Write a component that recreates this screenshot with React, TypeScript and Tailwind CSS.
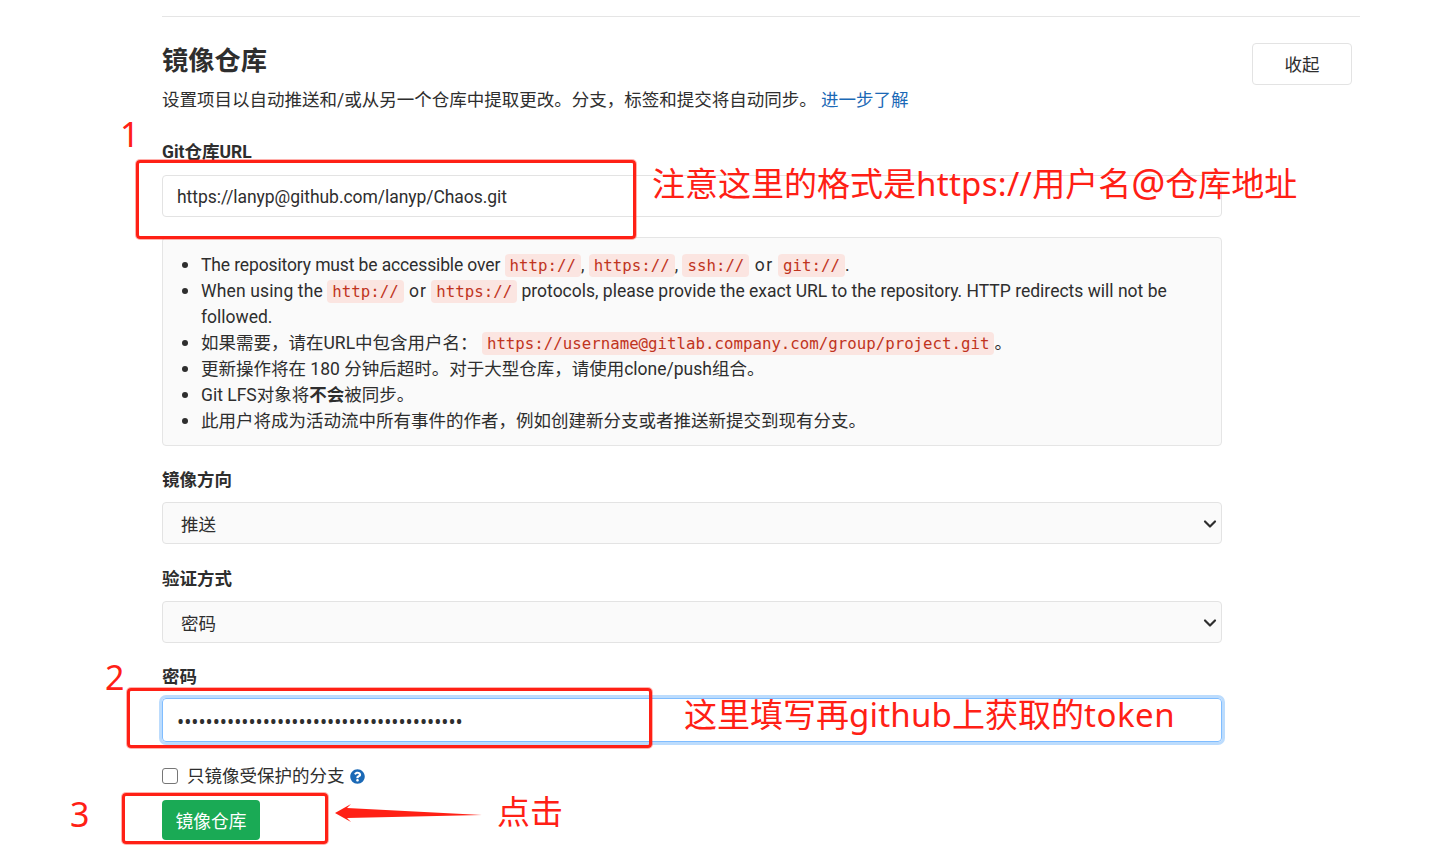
import { ChevronDown } from "lucide-react";
import { FaQuestionCircle } from "react-icons/fa";
import type { ReactNode } from "react";

const Code = ({ children }: { children: ReactNode }) => (
  <code className="bg-[#fbe5e1] text-[#c0341d] rounded-[4px] px-[5px] py-[2px] leading-none font-['DejaVu_Sans_Mono',monospace] text-[15.76px]">
    {children}
  </code>
);

const Item = ({ children }: { children: ReactNode }) => (
  <li className="relative before:absolute before:left-[-19px] before:top-[10px] before:w-[6px] before:h-[6px] before:rounded-full before:bg-[#2e2e2e]">
    {children}
  </li>
);

const Field = ({ label, gap, children }: { label: string; gap: string; children: ReactNode }) => (
  <div className={`flex flex-col w-[1060px] ${gap}`}>
    <label className="font-bold text-[#2e2e2e]">{label}</label>
    {children}
  </div>
);

const FakeSelect = ({ value }: { value: string }) => (
  <div className="relative h-[42px]">
    <select
      defaultValue={value}
      className="appearance-none w-full h-full bg-[#fafafa] border border-[#e3e3e3] rounded-[4px] pl-[18px] pt-[4px] text-[#2e2e2e]"
    >
      <option>{value}</option>
    </select>
    <ChevronDown size={20} strokeWidth={2.6} className="absolute right-[2px] top-[12px] text-[#2e2e2e]" />
  </div>
);

const App = () => {
  return (
    <div className="relative w-[1435px] h-[849px] overflow-hidden bg-white text-[#2e2e2e] text-[17.5px] leading-[26px] font-['Roboto','Noto_Sans_CJK_SC',sans-serif]">
      <div className="flex flex-col ml-[162px] w-[1198px] pt-[16px]">
        <div className="border-t border-[#e5e5e5] flex justify-between pt-[26px] pr-[8px]">
          <div className="flex flex-col gap-[9px]">
            <h4 className="text-[26.25px] font-bold leading-[34px] pt-[1px] text-[#2e2e2e]">镜像仓库</h4>
            <p>
              设置项目以自动推送和/或从另一个仓库中提取更改。分支，标签和提交将自动同步。{" "}
              <a className="text-[#1b69b6]">进一步了解</a>
            </p>
          </div>
          <button className="w-[100px] h-[42px] border border-[#e3e3e3] rounded-[4px] pt-[2px] text-[#2e2e2e]">收起</button>
        </div>

        <div className="flex flex-col gap-[20px] mt-[26px]">
          <Field label="Git仓库URL" gap="gap-[10px]">
            <input
              readOnly
              value="https://lanyp@github.com/lanyp/Chaos.git"
              className="block h-[42px] border border-[#e3e3e3] rounded-[4px] px-[14px] pt-[2px] tracking-[-0.05px] text-[#2e2e2e]"
            />
          </Field>

          <div className="w-[1060px] bg-[#fafafa] border border-[#e5e5e5] rounded-[4px] pt-[14px] pb-[11px]">
            <ul className="pl-[38px] pr-[20px]">
              <Item>
                <span className="tracking-[-0.13px]">The repository must be accessible over</span> <Code>http://</Code>,{" "}
                <Code>https://</Code>, <Code>ssh://</Code> <span className="tracking-[1.5px] ml-[1px]">or</span>{" "}
                <Code>git://</Code>.
              </Item>
              <Item>
                <span className="tracking-[0.15px]">When using the</span> <Code>http://</Code>{" "}
                <span className="tracking-[1px] ml-[1px]">or</span> <Code>https://</Code> protocols, please provide the
                exact URL to the repository. HTTP redirects will not be followed.
              </Item>
              <Item>
                如果需要，请在URL中包含用户名： <Code>https://username@gitlab.company.com/group/project.git</Code>。
              </Item>
              <Item>更新操作将在 180 分钟后超时。对于大型仓库，请使用clone/push组合。</Item>
              <Item>
                Git LFS对象将<strong>不会</strong>被同步。
              </Item>
              <Item>此用户将成为活动流中所有事件的作者，例如创建新分支或者推送新提交到现有分支。</Item>
            </ul>
          </div>
        </div>

        <div className="flex flex-col gap-[21px] mt-[21px]">
          <Field label="镜像方向" gap="gap-[9px]">
            <FakeSelect value="推送" />
          </Field>

          <Field label="验证方式" gap="gap-[9px] pt-[1px]">
            <FakeSelect value="密码" />
          </Field>

          <Field label="密码" gap="gap-[8px]">
            <input
              readOnly
              type="password"
              value="ghp_0123456789abcdefghijklmnopqrstuvwxyz"
              className="block h-[44px] border border-[#80bdff] rounded-[4px] px-[14px] pt-[3px] text-[19px] font-['Noto_Sans',sans-serif] text-[#2e2e2e] shadow-[0_0_0_3px_#bcdcfd] outline-none"
            />
          </Field>

          <div className="flex flex-col gap-[11px]">
            <div className="flex items-center h-[26px]">
              <input type="checkbox" className="appearance-none w-[16px] h-[16px] border border-[#767676] rounded-[3px] bg-white" />
              <span className="ml-[9px]">只镜像受保护的分支</span>
              <FaQuestionCircle size={15} className="ml-[5px] text-[#1b69b6]" />
            </div>

            <button className="w-[98px] h-[40px] bg-[#1aaa55] text-white rounded-[4px] pt-[4px] text-[17.75px]">
              镜像仓库
            </button>
          </div>
        </div>
      </div>

      {/* red annotations drawn over the screenshot */}
      <div className="absolute left-[136px] top-[160px] w-[500px] h-[79px] border-[3px] border-[#ff2015] rounded-[4px] shadow-[0_0_0_1px_rgba(255,32,21,0.35)]" />
      <div className="absolute left-[127px] top-[688px] w-[525px] h-[60px] border-[3px] border-[#ff2015] rounded-[4px] shadow-[0_0_0_1px_rgba(255,32,21,0.35)]" />
      <div className="absolute left-[122px] top-[793px] w-[206px] h-[51px] border-[3px] border-[#ff2015] rounded-[4px] shadow-[0_0_0_1px_rgba(255,32,21,0.35)]" />

      <div className="absolute inset-0 font-['Noto_Sans','Noto_Sans_CJK_SC',sans-serif] text-[#ff2015] text-[33px] leading-[48px] whitespace-nowrap">
        <span className="absolute left-[120px] top-[112px] text-[34px] leading-[44px]">1</span>
        <span className="absolute left-[105px] top-[655px] text-[34px] leading-[44px]">2</span>
        <span className="absolute left-[70px] top-[792px] text-[34px] leading-[44px]">3</span>
        <span className="absolute left-[652px] top-[160px]">
          注意这里的格式是<span className="tracking-[0.3px]">https://</span>用户名<span className="text-[38px] leading-none">@</span>仓库地址
        </span>
        <span className="absolute left-[684px] top-[691px]">
          这里填写再<span className="tracking-[0.2px]">github</span>上获取的<span className="tracking-[0.5px]">token</span>
        </span>
        <span className="absolute left-[497px] top-[788px]">点击</span>
      </div>

      <svg className="absolute left-[330px] top-[800px]" width="156" height="28" viewBox="0 0 156 28">
        <path d="M5 13 L21 4 L17 8 L152 15 L17 18 L21 22 Z" fill="#ff2015" />
      </svg>
    </div>
  );
};

export default App;
